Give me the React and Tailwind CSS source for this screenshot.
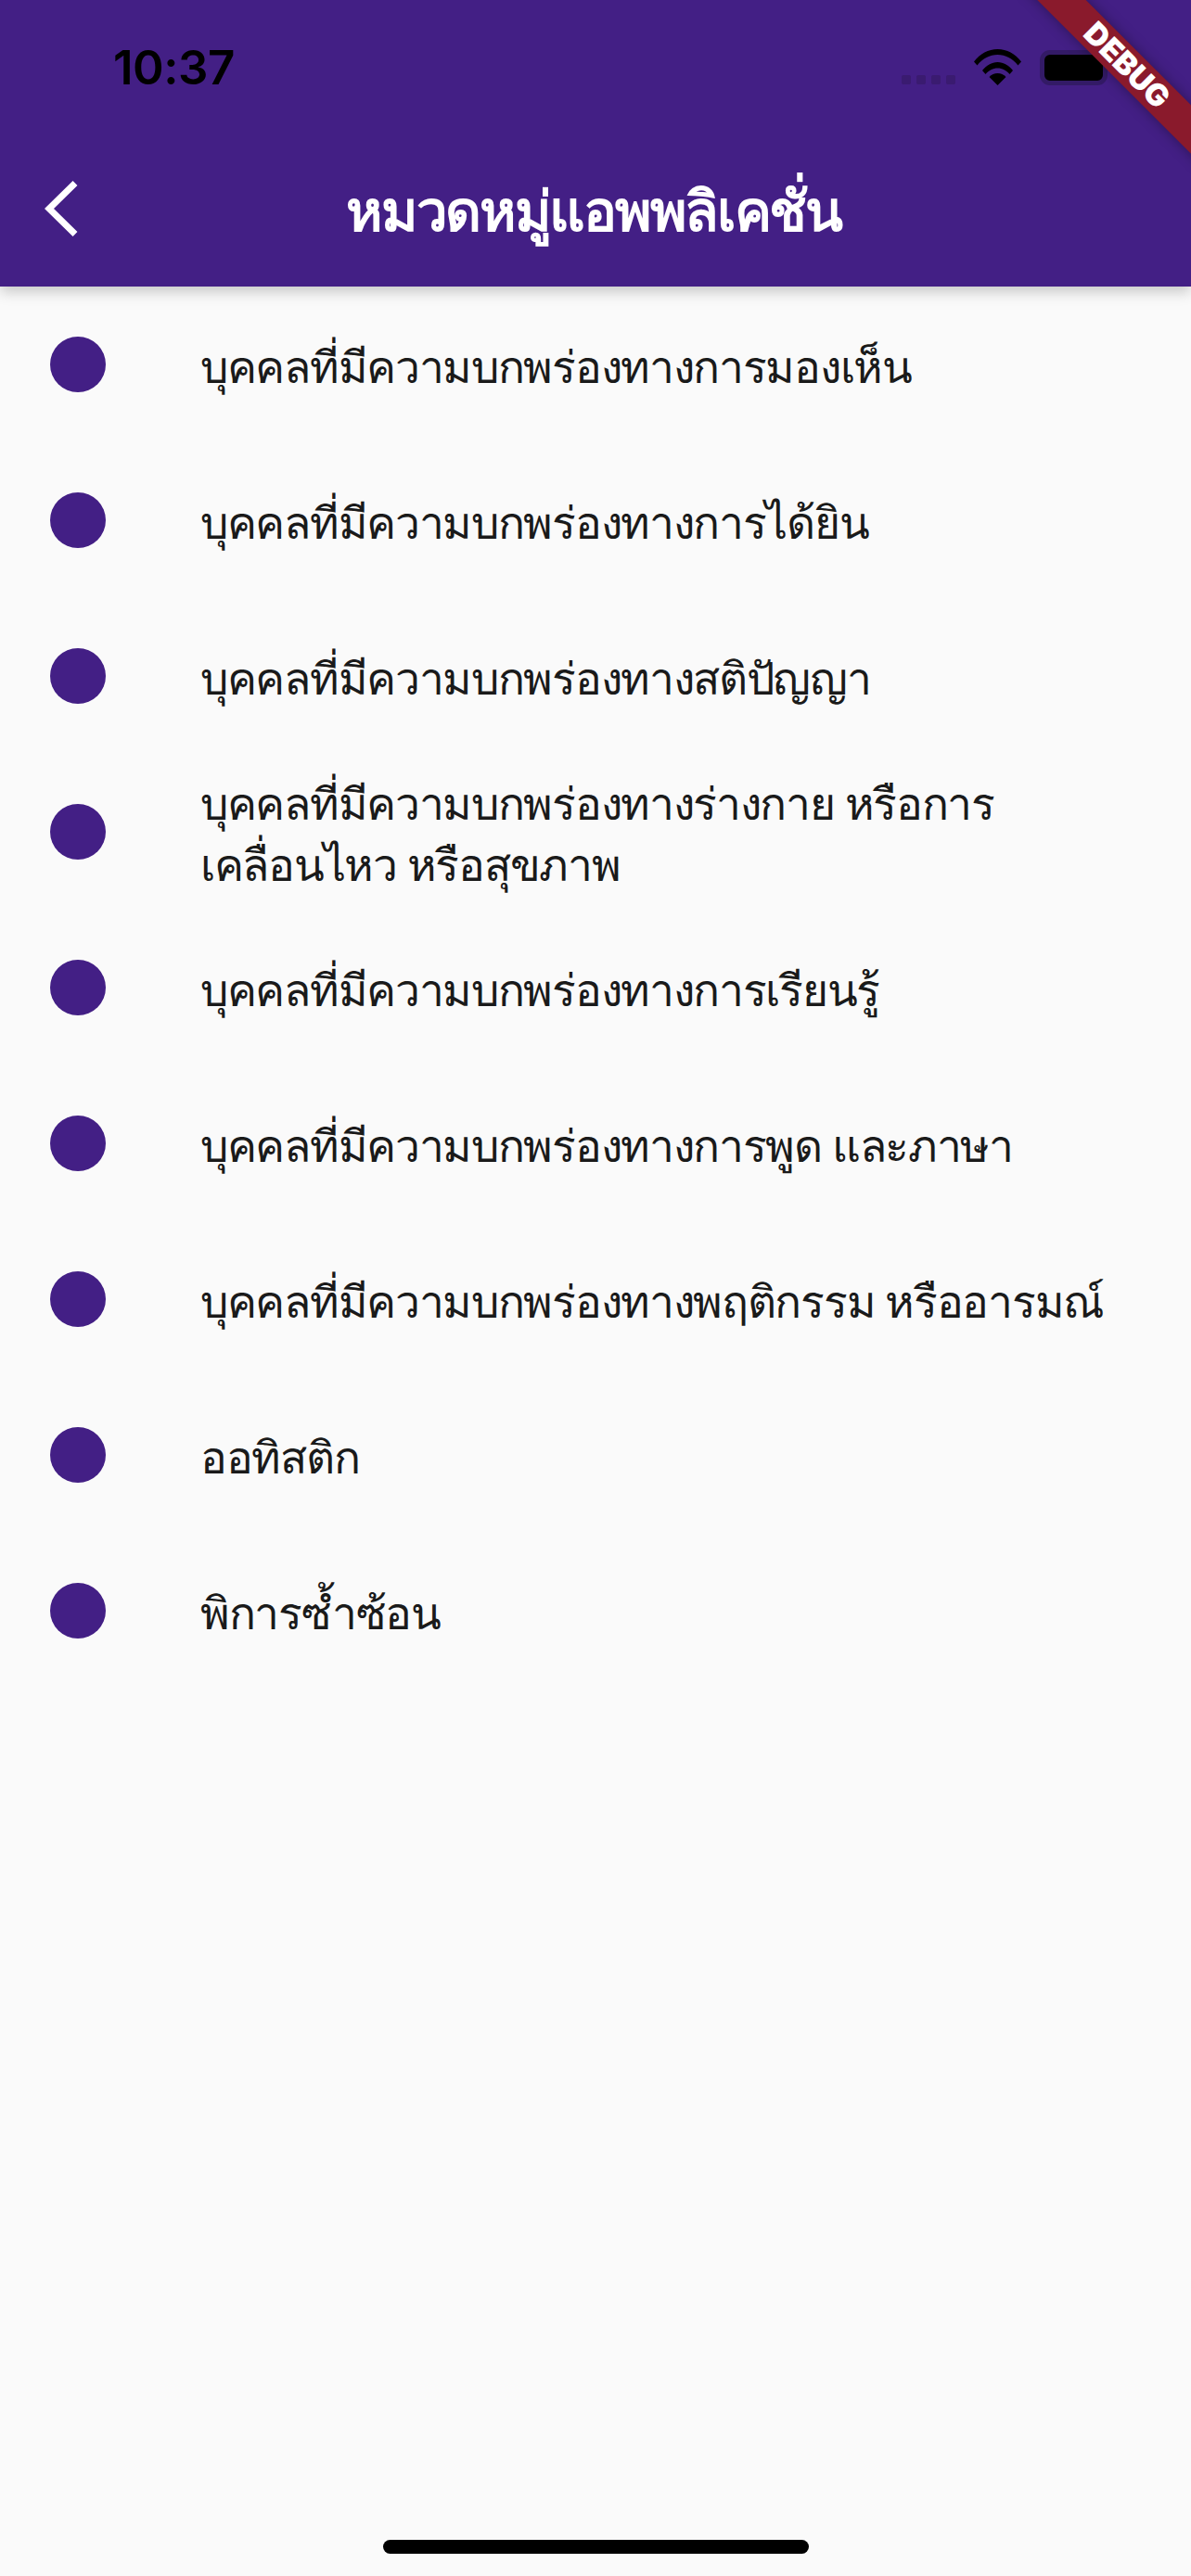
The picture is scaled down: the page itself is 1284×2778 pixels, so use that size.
const rows = [
  "บุคคลที่มีความบกพร่องทางการมองเห็น",
  "บุคคลที่มีความบกพร่องทางการได้ยิน",
  "บุคคลที่มีความบกพร่องทางสติปัญญา",
  "บุคคลที่มีความบกพร่องทางร่างกาย หรือการเคลื่อนไหว หรือสุขภาพ",
  "บุคคลที่มีความบกพร่องทางการเรียนรู้",
  "บุคคลที่มีความบกพร่องทางการพูด และภาษา",
  "บุคคลที่มีความบกพร่องทางพฤติกรรม หรืออารมณ์",
  "ออทิสติก",
  "พิการซ้ำซ้อน",
];

function WifiIcon() {
  return (
    <svg width="51" height="39" viewBox="0 0 51 39" fill="#000">
      <path d="M0 13.500C6.500 5 15.500 0 25.500 0S44.500 5 51 13.500L47.500 17.500C41.500 10 34 6 25.500 6S9.500 10 3.500 17.500Z" />
      <path d="M9 23C13.500 17.500 19 14 25.500 14S37.500 17.500 42 23L38.500 27C35 23 30.500 20.500 25.500 20.500S16 23 12.500 27Z" />
      <path d="M16.500 30C19 27.500 22 26 25.500 26S32 27.500 34.500 30L25.500 39Z" />
    </svg>
  );
}

function StatusBar() {
  return (
    <div className="flex h-[141px] items-start justify-between pl-[122px] pr-[90px] pt-[53px]">
      <span className="font-['Inter','Liberation_Sans',sans-serif] text-[51px] leading-[40px] font-semibold tracking-[-0.5px] text-black">
        10:37
      </span>
      <div className="flex items-end gap-5">
        <div className="flex gap-[6px] pb-[1px]">
          <div className="h-[10px] w-[10px] rounded-[2px] bg-[#3a1b70]" />
          <div className="h-[10px] w-[10px] rounded-[2px] bg-[#3a1b70]" />
          <div className="h-[10px] w-[10px] rounded-[2px] bg-[#3a1b70]" />
          <div className="h-[10px] w-[10px] rounded-[2px] bg-[#3a1b70]" />
        </div>
        <WifiIcon />
        <div className="h-[38px] w-[73px] rounded-[11px] border-[5px] border-[#331a66] bg-black" />
      </div>
    </div>
  );
}

function DebugBanner() {
  return (
    <div className="pointer-events-none absolute top-0 right-0 z-20 h-[240px] w-[240px] overflow-hidden">
      <div className="absolute top-[52px] left-[1px] flex h-[37px] w-[340px] rotate-45 items-center justify-center bg-[#8a1a2c] font-['Inter','Liberation_Sans',sans-serif] text-[33px] leading-none font-black text-white shadow-[0_0_14px_rgba(0,0,0,0.35)]">
        DEBUG
      </div>
    </div>
  );
}

export default function App() {
  return (
    <div className="relative flex h-[2778px] w-[1284px] flex-col overflow-hidden bg-[#fafafa] font-['Noto_Sans','Liberation_Sans',sans-serif]">
      <header className="relative z-10 h-[309px] bg-[#431f85] shadow-[0_6px_14px_rgba(0,0,0,0.2)]">
        <StatusBar />
        <div className="relative flex h-[168px] items-center justify-center">
          <svg className="absolute top-[54px] left-[48px]" width="36" height="60" viewBox="0 0 36 60" fill="none" stroke="#fff" strokeWidth="7">
            <path d="M33 2.500L5 30l28 27.500" />
          </svg>
          <h1 className="pt-[2px] pr-[4px] text-[60px] leading-none font-semibold tracking-[-2.3px] text-white">หมวดหมู่แอพพลิเคชั่น</h1>
        </div>
      </header>
      <ul className="flex flex-col">
        {rows.map((row) => (
          <li key={row} className="flex h-[168px] items-center pr-[48px] pl-[54px]">
            <div className="h-[60px] w-[60px] shrink-0 rounded-full bg-[#431f85]" />
            <span className="ml-[102px] pt-[3px] text-[48px] leading-[66px] tracking-[-1.3px] text-[#1a1a1a]">{row}</span>
          </li>
        ))}
      </ul>
      <div className="mt-auto mb-[24px] h-[15px] w-[459px] self-center rounded-full bg-black" />
      <DebugBanner />
    </div>
  );
}
